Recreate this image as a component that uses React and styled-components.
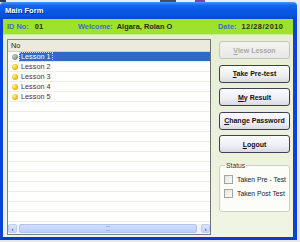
import React from "react";
import styled, { createGlobalStyle } from "styled-components";

const Global = createGlobalStyle`
  html, body { margin: 0; padding: 0; background: #dfe3ea; }
  body { font-family: "Liberation Sans", Arial, sans-serif; }
  * { box-sizing: border-box; }
`;

const Screen = styled.div`
  width: 300px;
  height: 242px;
  overflow: hidden;
  background: #e6e8ee;
`;

const Desktop = styled.div`
  height: 2px;
  background: linear-gradient(90deg, #3a3360 0 6px, #e9ecf2 6px 160px, #4a4a60 160px 176px, #e9ecf2 176px 195px, #8a40a0 195px 205px, #e9ecf2 205px);
`;

const Window = styled.div`
  width: 297px;
  height: 238px;
  display: flex;
  flex-direction: column;
`;

const TitleBar = styled.div`
  height: 17px;
  flex: none;
  display: flex;
  align-items: center;
  padding-left: 5px;
  border-radius: 4px 4px 0 0;
  background: linear-gradient(#4c97fb 0%, #1867ec 18%, #0a5ae6 45%, #0553df 80%, #0348cf 100%);
  color: #fff;
  font-weight: bold;
  font-size: 7.6px;
  text-shadow: 1px 1px 0 #0a2a8a;
`;

const Frame = styled.div`
  flex: 1;
  display: flex;
  flex-direction: column;
  border-left: 3px solid #0b43d6;
  border-right: 4px solid #0b43d6;
  border-bottom: 3px solid #0b3ad0;
  min-height: 0;
`;

const InfoBar = styled.div`
  height: 16px;
  flex: none;
  display: flex;
  align-items: center;
  padding-left: 4px;
  background: #9ee22e;
  border-bottom: 1px solid #c8ee8c;
  font-weight: bold;
  font-size: 7.4px;
`;

const Field = styled.div`
  display: flex;
  gap: ${(p) => p.$gap}px;
  width: ${(p) => (p.$width ? `${p.$width}px` : "auto")};
  flex: ${(p) => (p.$width ? "none" : "1")};
`;

const Label = styled.span`
  color: #3e6fb8;
`;

const Value = styled.span`
  color: #2e2a0c;
  letter-spacing: ${(p) => p.$ls || 0}px;
`;

const Content = styled.div`
  flex: 1;
  display: flex;
  padding: 4px 0 2px 4px;
  background: linear-gradient(#e6eed4, #f0f4e4);
  min-height: 0;
`;

const ListPanel = styled.div`
  width: 204px;
  display: flex;
  flex-direction: column;
  border: 1px solid #7e8287;
  border-right-color: #6f7378;
  background: #fff;
  overflow: hidden;
  font-size: 7.3px;
`;

const Header = styled.div`
  height: 12px;
  flex: none;
  display: flex;
  align-items: center;
  padding-left: 3px;
  background: #ebeadb;
  border-bottom: 1px solid #d4d0c0;
  color: #222;
`;

const Rows = styled.div`
  flex: 1;
  overflow: hidden;
`;

const Row = styled.div`
  height: 10px;
  display: flex;
  align-items: stretch;
  border-bottom: 1px solid #efede4;
`;

const Dot = styled.span`
  width: 11px;
  flex: none;
  display: flex;
  align-items: center;
  justify-content: center;
  &::before {
    content: "";
    display: ${(p) => (p.$kind ? "block" : "none")};
    width: 6px;
    height: 6px;
    border-radius: 50%;
    margin-left: 2px;
    background: ${(p) =>
      p.$kind === "done"
        ? "radial-gradient(circle at 35% 35%, #c8d0c4, #7f8c80 70%)"
        : "radial-gradient(circle at 35% 35%, #fff3a0, #f2b800 60%, #d89000)"};
  }
`;

const Cell = styled.div`
  flex: 1;
  display: flex;
  align-items: center;
  padding-left: 1px;
  background: ${(p) => (p.$selected ? "#316ac5" : "transparent")};
  color: ${(p) => (p.$selected ? "#fff" : "#5a2a2a")};
`;

const CellText = styled.span`
  padding: 0 1px;
  line-height: 8px;
  outline: ${(p) => (p.$focus ? "1px dotted #c8d8f0" : "none")};
`;

const HScroll = styled.div`
  height: 10px;
  flex: none;
  display: flex;
  gap: 1px;
  padding: 0 0 1px 0;
  background: #f3f3ef;
`;

const ArrowBtn = styled.div`
  width: 9px;
  display: flex;
  align-items: center;
  justify-content: center;
  border-radius: 2px;
  background: linear-gradient(#dbe6fd, #c3d4fb);
  border: 1px solid #bccdf5;
  color: #4d6185;
  font-size: 6px;
  font-weight: bold;
  line-height: 1;
`;

const Track = styled.div`
  flex: 1;
  display: flex;
  padding: 0 3px 0 1px;
`;

const Thumb = styled.div`
  flex: 1;
  border-radius: 2px;
  background: linear-gradient(#d2defc, #bccffa);
  border: 1px solid #b0c4f2;
  display: flex;
  align-items: center;
  justify-content: center;
  &::after {
    content: "";
    width: 4px;
    height: 3px;
    border-top: 1px solid #9fb4e6;
    border-bottom: 1px solid #9fb4e6;
  }
`;

const Side = styled.div`
  width: 71px;
  margin-left: 8px;
  padding-top: 2px;
  display: flex;
  flex-direction: column;
  gap: 5.5px;
`;

const Button = styled.div`
  height: 18px;
  display: flex;
  align-items: center;
  justify-content: center;
  border-radius: 3px;
  border: 1px solid ${(p) => (p.$disabled ? "#c5c4bc" : "#3d3f55")};
  background: ${(p) =>
    p.$disabled
      ? "linear-gradient(#f3f3f1, #e8e8e6)"
      : "linear-gradient(#fbfbfd 0%, #eeeef4 60%, #d9d9e2 100%)"};
  color: ${(p) => (p.$disabled ? "#aaa99f" : "#111")};
  font-weight: bold;
  font-size: 7px;
  u { text-decoration: underline; }
`;

const Group = styled.fieldset`
  margin: 3.5px 0 0 0;
  padding: 6px 0 6px 4px;
  height: 50px;
  border: 1px solid #d0d0bf;
  border-radius: 3px;
  background: #fcfcf9;
  display: flex;
  flex-direction: column;
  gap: 5px;
  font-size: 6.8px;
  color: #222;
  legend {
    padding: 0 1px;
    margin-left: 1px;
    color: #333;
  }
`;

const Check = styled.label`
  display: flex;
  align-items: center;
  gap: 4px;
  &::before {
    content: "";
    width: 7px;
    height: 7px;
    border: 1px solid #a4a4a0;
    background: linear-gradient(135deg, #e4e4e0, #fbfbf8);
  }
`;

const lessons = [
  { name: "Lesson 1", kind: "done" },
  { name: "Lesson 2", kind: "todo" },
  { name: "Lesson 3", kind: "todo" },
  { name: "Lesson 4", kind: "todo" },
  { name: "Lesson 5", kind: "todo" },
];

export default function App() {
  const rows = [...lessons];
  while (rows.length < 17) rows.push({ name: "", kind: null });
  return (
    <Screen>
      <Global />
      <Desktop />
      <Window>
        <TitleBar>Main Form</TitleBar>
        <Frame>
          <InfoBar>
            <Field $width={71} $gap={6}>
              <Label>ID No:</Label>
              <Value>01</Value>
            </Field>
            <Field $width={140} $gap={4}>
              <Label>Welcome:</Label>
              <Value>Algara, Rolan O</Value>
            </Field>
            <Field $gap={5}>
              <Label>Date:</Label>
              <Value $ls={0.5}>12/28/2010</Value>
            </Field>
          </InfoBar>
          <Content>
            <ListPanel>
              <Header>No</Header>
              <Rows>
                {rows.map((r, i) => (
                  <Row key={i}>
                    <Dot $kind={r.kind} />
                    <Cell $selected={i === 0}>
                      <CellText $focus={i === 0}>{r.name}</CellText>
                    </Cell>
                  </Row>
                ))}
              </Rows>
              <HScroll>
                <ArrowBtn>‹</ArrowBtn>
                <Track>
                  <Thumb />
                </Track>
                <ArrowBtn>›</ArrowBtn>
              </HScroll>
            </ListPanel>
            <Side>
              <Button $disabled>
                <span><u>V</u>iew Lesson</span>
              </Button>
              <Button>
                <span><u>T</u>ake Pre-test</span>
              </Button>
              <Button>
                <span><u>M</u>y Result</span>
              </Button>
              <Button>
                <span><u>C</u>hange Password</span>
              </Button>
              <Button>
                <span><u>L</u>ogout</span>
              </Button>
              <Group>
                <legend>Status</legend>
                <Check>Taken Pre - Test</Check>
                <Check>Taken Post Test</Check>
              </Group>
            </Side>
          </Content>
        </Frame>
      </Window>
    </Screen>
  );
}
